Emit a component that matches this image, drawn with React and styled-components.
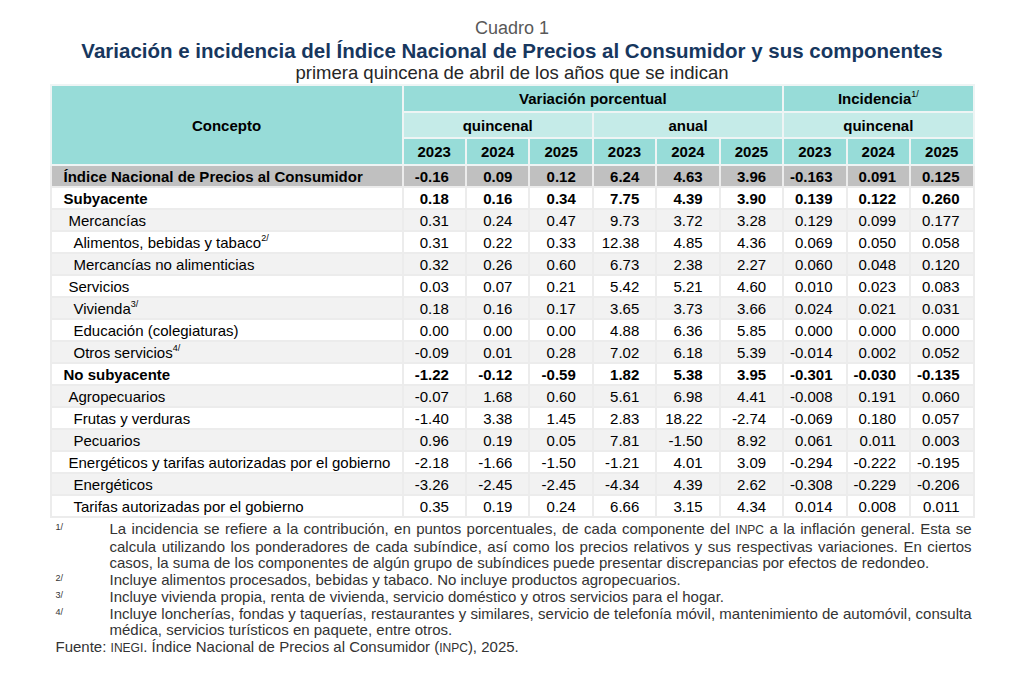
import React from "react";
import styled, { createGlobalStyle } from "styled-components";

const GlobalStyle = createGlobalStyle`
  body {
    margin: 0;
    background: #ffffff;
    font-family: "Liberation Sans", Arial, Helvetica, sans-serif;
    color: #000;
  }
`;

const years = ["2023", "2024", "2025"];

// [concepto, level, bold, superscript, variacion (6), incidencia (3)]
const rows = [
  ["Índice Nacional de Precios al Consumidor", 0, true, null, ["-0.16", "0.09", "0.12", "6.24", "4.63", "3.96"], ["-0.163", "0.091", "0.125"]],
  ["Subyacente", 0, true, null, ["0.18", "0.16", "0.34", "7.75", "4.39", "3.90"], ["0.139", "0.122", "0.260"]],
  ["Mercancías", 1, false, null, ["0.31", "0.24", "0.47", "9.73", "3.72", "3.28"], ["0.129", "0.099", "0.177"]],
  ["Alimentos, bebidas y tabaco", 2, false, "2/", ["0.31", "0.22", "0.33", "12.38", "4.85", "4.36"], ["0.069", "0.050", "0.058"]],
  ["Mercancías no alimenticias", 2, false, null, ["0.32", "0.26", "0.60", "6.73", "2.38", "2.27"], ["0.060", "0.048", "0.120"]],
  ["Servicios", 1, false, null, ["0.03", "0.07", "0.21", "5.42", "5.21", "4.60"], ["0.010", "0.023", "0.083"]],
  ["Vivienda", 2, false, "3/", ["0.18", "0.16", "0.17", "3.65", "3.73", "3.66"], ["0.024", "0.021", "0.031"]],
  ["Educación (colegiaturas)", 2, false, null, ["0.00", "0.00", "0.00", "4.88", "6.36", "5.85"], ["0.000", "0.000", "0.000"]],
  ["Otros servicios", 2, false, "4/", ["-0.09", "0.01", "0.28", "7.02", "6.18", "5.39"], ["-0.014", "0.002", "0.052"]],
  ["No subyacente", 0, true, null, ["-1.22", "-0.12", "-0.59", "1.82", "5.38", "3.95"], ["-0.301", "-0.030", "-0.135"]],
  ["Agropecuarios", 1, false, null, ["-0.07", "1.68", "0.60", "5.61", "6.98", "4.41"], ["-0.008", "0.191", "0.060"]],
  ["Frutas y verduras", 2, false, null, ["-1.40", "3.38", "1.45", "2.83", "18.22", "-2.74"], ["-0.069", "0.180", "0.057"]],
  ["Pecuarios", 2, false, null, ["0.96", "0.19", "0.05", "7.81", "-1.50", "8.92"], ["0.061", "0.011", "0.003"]],
  ["Energéticos y tarifas autorizadas por el gobierno", 1, false, null, ["-2.18", "-1.66", "-1.50", "-1.21", "4.01", "3.09"], ["-0.294", "-0.222", "-0.195"]],
  ["Energéticos", 2, false, null, ["-3.26", "-2.45", "-2.45", "-4.34", "4.39", "2.62"], ["-0.308", "-0.229", "-0.206"]],
  ["Tarifas autorizadas por el gobierno", 2, false, null, ["0.35", "0.19", "0.24", "6.66", "3.15", "4.34"], ["0.014", "0.008", "0.011"]],
];

function rowBackground(i) {
  if (i === 0) return "#c0c0c0";
  return i % 2 === 0 ? "#f2f2f2" : "#ffffff";
}

function App() {
  const notes = [
    [
      "1/",
      <>
        La incidencia se refiere a la contribución, en puntos porcentuales, de cada componente del <Caps>INPC</Caps> a
        la inflación general. Esta se calcula utilizando los ponderadores de cada subíndice, así como los precios
        relativos y sus respectivas variaciones. En ciertos casos, la suma de los componentes de algún grupo de
        subíndices puede presentar discrepancias por efectos de redondeo.
      </>,
    ],
    ["2/", "Incluye alimentos procesados, bebidas y tabaco. No incluye productos agropecuarios."],
    ["3/", "Incluye vivienda propia, renta de vivienda, servicio doméstico y otros servicios para el hogar."],
    [
      "4/",
      "Incluye loncherías, fondas y taquerías, restaurantes y similares, servicio de telefonía móvil, mantenimiento de automóvil, consulta médica, servicios turísticos en paquete, entre otros.",
    ],
  ];

  return (
    <Page>
      <GlobalStyle />
      <Heading>
        <Kicker>Cuadro 1</Kicker>
        <Title>Variación e incidencia del Índice Nacional de Precios al Consumidor y sus componentes</Title>
        <Subtitle>primera quincena de abril de los años que se indican</Subtitle>
      </Heading>

      <Table>
        <colgroup>
          <col style={{ width: 352 }} />
          {Array.from({ length: 9 }).map((_, i) => (
            <col key={i} />
          ))}
        </colgroup>
        <thead>
          <tr>
            <HeadCell rowSpan={3}>Concepto</HeadCell>
            <HeadCell colSpan={6}>Variación porcentual</HeadCell>
            <HeadCell colSpan={3}>
              Incidencia<Sup>1/</Sup>
            </HeadCell>
          </tr>
          <tr>
            <HeadCell $light colSpan={3}>quincenal</HeadCell>
            <HeadCell $light colSpan={3}>anual</HeadCell>
            <HeadCell $light colSpan={3}>quincenal</HeadCell>
          </tr>
          <tr>
            {[0, 1, 2].map((g) =>
              years.map((y) => <HeadCell key={g + y}>{y}</HeadCell>)
            )}
          </tr>
        </thead>
        <tbody>
          {rows.map(([label, level, bold, sup, vari, inc], i) => (
            <Row key={label} $bg={rowBackground(i)} $bold={bold}>
              <LabelCell $level={level}>
                {label}
                {sup && <Sup>{sup}</Sup>}
              </LabelCell>
              {vari.map((v, j) => (
                <NumCell key={"v" + j} $pad={16}>
                  {v}
                </NumCell>
              ))}
              {inc.map((v, j) => (
                <NumCell key={"i" + j} $pad={13}>
                  {v}
                </NumCell>
              ))}
            </Row>
          ))}
        </tbody>
      </Table>

      <Notes>
        {notes.map(([mark, text]) => (
          <React.Fragment key={mark}>
            <NoteMark>{mark}</NoteMark>
            <NoteText>{text}</NoteText>
          </React.Fragment>
        ))}
      </Notes>
      <Source>
        Fuente: <Caps>INEGI</Caps>. Índice Nacional de Precios al Consumidor (<Caps>INPC</Caps>), 2025.
      </Source>
    </Page>
  );
}

export default App;

const Page = styled.div`
  width: 1024px;
  height: 678px;
  padding-top: 18px;
  box-sizing: border-box;
  overflow: hidden;
`;

const Heading = styled.div`
  text-align: center;
  margin-bottom: 1px;
`;

const Kicker = styled.div`
  font-size: 18px;
  line-height: 21px;
  color: #595959;
`;

const Title = styled.div`
  font-size: 20.5px;
  line-height: 23px;
  font-weight: bold;
  color: #17375e;
`;

const Subtitle = styled.div`
  font-size: 18.5px;
  line-height: 21px;
  color: #262626;
`;

const Table = styled.table`
  width: 925px;
  margin: 0 auto;
  border-collapse: collapse;
  table-layout: fixed;
  font-size: 15px;
  line-height: 17px;
`;

const HeadCell = styled.th`
  height: 24.7px;
  padding: 0;
  border: 2px solid #eef4f4;
  background: ${(p) => (p.$light ? "#c5ebe8" : "#97dcd8")};
  font-weight: bold;
  text-align: center;
  vertical-align: middle;
  color: #000;
`;

const Row = styled.tr`
  background: ${(p) => p.$bg};
  font-weight: ${(p) => (p.$bold ? "bold" : "normal")};

  td {
    height: 20px;
    padding-top: 0;
    padding-bottom: 0;
    border: 2px solid #ececec;
    white-space: nowrap;
    color: #000;
  }
`;

const LabelCell = styled.td`
  text-align: left;
  padding-left: ${(p) => 12 + p.$level * 5}px;
`;

const NumCell = styled.td`
  text-align: right;
  padding-right: ${(p) => p.$pad}px;
`;

const Sup = styled.sup`
  font-size: 9px;
  line-height: 0;
  vertical-align: 7px;
  font-weight: normal;
`;

const Caps = styled.span`
  font-size: 12px;
`;

const Notes = styled.div`
  width: 925px;
  margin: 3px auto 0;
  padding: 0 3px 0 6px;
  box-sizing: border-box;
  display: grid;
  grid-template-columns: 54px 1fr;
  font-size: 15px;
  line-height: 16.7px;
  color: #333;
`;

const NoteMark = styled.div`
  font-size: 9px;
  line-height: 12px;
`;

const NoteText = styled.div`
  text-align: justify;
`;

const Source = styled.div`
  width: 925px;
  margin: 0 auto;
  padding-left: 6px;
  box-sizing: border-box;
  font-size: 15px;
  line-height: 16.7px;
  color: #333;
`;
